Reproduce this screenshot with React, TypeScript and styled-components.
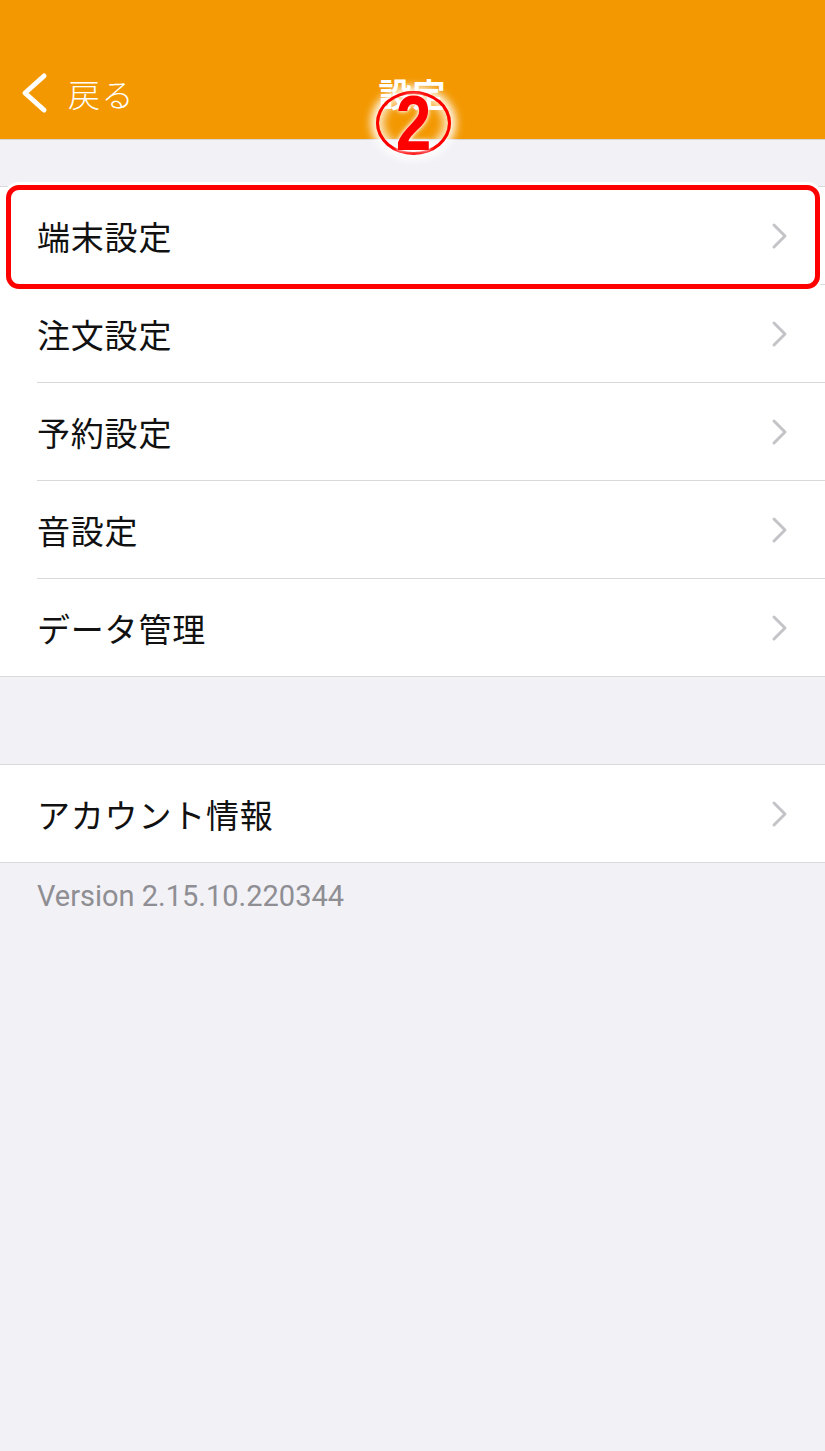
import React from "react";
import styled, { createGlobalStyle } from "styled-components";

const Global = createGlobalStyle`
  html, body { margin: 0; padding: 0; background: #f2f1f6; }
  body { font-family: "Noto Sans CJK JP", "Noto Sans", sans-serif; }
  * { box-sizing: border-box; }
`;

const Screen = styled.div`
  position: relative;
  width: 825px;
  min-height: 1451px;
  background: #f2f1f6;
  overflow: hidden;
`;

const Header = styled.header`
  position: relative;
  height: 140px;
  padding-top: 46px;
  background: #f39800;
  border-bottom: 1px solid #d6d6da;
  display: grid;
  grid-template-columns: 1fr auto 1fr;
  align-items: center;
  color: #fff;
`;

const BackButton = styled.div`
  display: flex;
  align-items: center;
  gap: 20px;
  padding-left: 20px;
  font-size: 32px;
  font-weight: 300;
  letter-spacing: 1.5px;
`;

const Title = styled.div`
  font-size: 33px;
  font-weight: 700;
  letter-spacing: 1px;
`;

const Annotation = styled.div`
  position: absolute;
  left: 376px;
  top: 91px;
  width: 75px;
  height: 64px;
  border: 3px solid #ff0000;
  border-radius: 50%;
  box-shadow: 0 0 8px 5px rgba(255, 255, 255, 0.95),
    inset 0 0 10px 4px rgba(255, 255, 255, 0.85);
  display: flex;
  align-items: center;
  justify-content: center;
  z-index: 2;
`;

const AnnotationDigit = styled.span`
  display: block;
  font-family: "Liberation Sans", Arial, sans-serif;
  font-weight: 700;
  font-size: 64px;
  line-height: 1;
  color: #ff0000;
  transform: scaleY(1.22);
  text-shadow: 0 0 6px #fff, 0 0 3px #fff;
`;

const Group = styled.section<{ $top: number }>`
  margin-top: ${(p) => p.$top}px;
  background: #fff;
  border-top: 1px solid #d9d9dc;
  border-bottom: 1px solid #d9d9dc;
`;

const Row = styled.div<{ $last?: boolean }>`
  position: relative;
  height: ${(p) => (p.$last ? 97 : 98)}px;
  padding-left: 37px;
`;

const RowInner = styled.div<{ $last?: boolean }>`
  height: 100%;
  display: flex;
  align-items: center;
  justify-content: space-between;
  padding-right: 36px;
  border-bottom: ${(p) => (p.$last ? "none" : "1px solid #d9d9dc")};
`;

const Label = styled.span`
  font-size: 33px;
  font-weight: 400;
  color: #111;
  letter-spacing: 0.8px;
`;

const Highlight = styled.div`
  position: absolute;
  left: 6px;
  right: 5px;
  top: -2px;
  bottom: -4px;
  border: 5px solid #ff0000;
  border-radius: 13px;
  box-shadow: 0 0 0 3px #fff;
  pointer-events: none;
`;

const Version = styled.div`
  padding: 16px 0 0 37px;
  font-family: Roboto, "Liberation Sans", sans-serif;
  font-size: 29px;
  color: #8e8e93;
`;

const Chevron = () => (
  <svg width="18" height="28" viewBox="0 0 18 28">
    <path d="M3 3 L14 14 L3 25" fill="none" stroke="#c4c4c8" strokeWidth="3" strokeLinecap="round" strokeLinejoin="round" />
  </svg>
);

const BackChevron = () => (
  <svg width="28" height="42" viewBox="0 0 28 42">
    <path d="M24 4 L5 21 L24 38" fill="none" stroke="#fff" strokeWidth="5" strokeLinecap="round" strokeLinejoin="round" />
  </svg>
);

const items = ["端末設定", "注文設定", "予約設定", "音設定", "データ管理"];

export default function App() {
  return (
    <Screen>
      <Global />
      <Header>
        <BackButton>
          <BackChevron />
          <span>戻る</span>
        </BackButton>
        <Title>設定</Title>
        <div />
      </Header>
      <Annotation>
        <AnnotationDigit>2</AnnotationDigit>
      </Annotation>
      <Group $top={46}>
        {items.map((t, i) => (
          <Row key={t} $last={i === items.length - 1}>
            <RowInner $last={i === items.length - 1}>
              <Label>{t}</Label>
              <Chevron />
            </RowInner>
            {i === 0 && <Highlight />}
          </Row>
        ))}
      </Group>
      <Group $top={87}>
        <Row $last>
          <RowInner $last>
            <Label>アカウント情報</Label>
            <Chevron />
          </RowInner>
        </Row>
      </Group>
      <Version>Version 2.15.10.220344</Version>
    </Screen>
  );
}
